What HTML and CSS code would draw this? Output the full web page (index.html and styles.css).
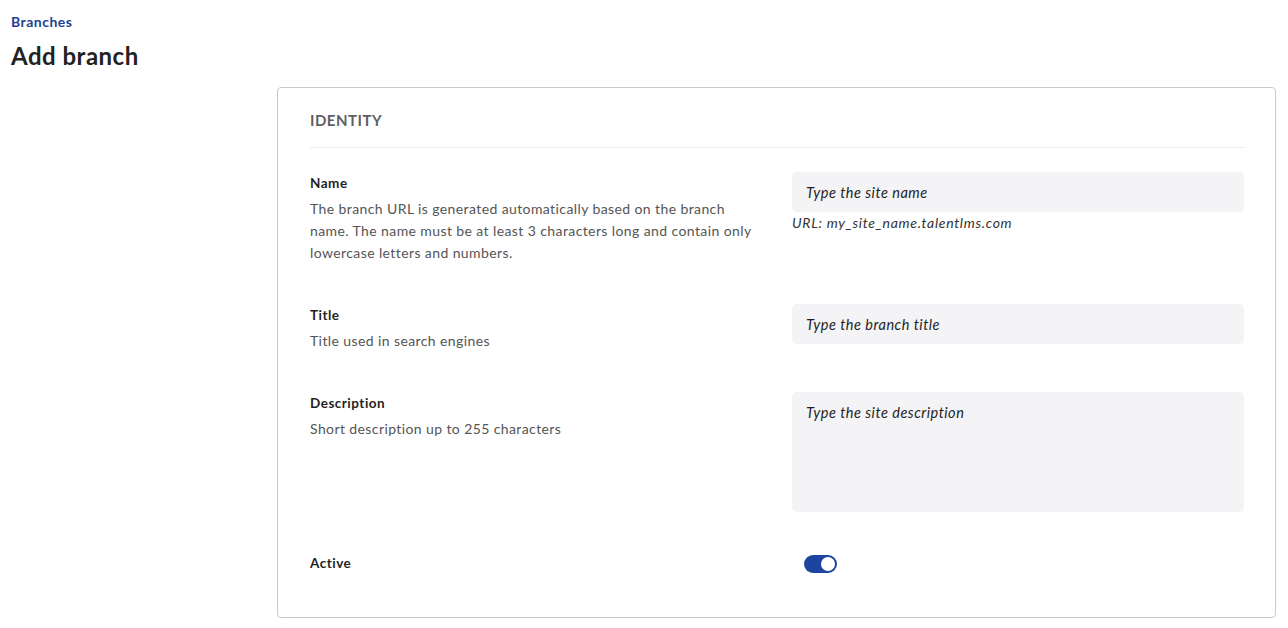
FILE: index.html
```html
<!DOCTYPE html>
<html lang="en">
<head>
  <meta charset="UTF-8">
  <meta name="viewport" content="width=device-width, initial-scale=1.0">
  <title>Add branch</title>
  <link rel="stylesheet" href="styles.css">
</head>
<body>
  <div class="page">
    <a class="crumb" href="#">Branches</a>
    <h1>Add branch</h1>

    <div class="card">
      <h2 class="section-title">IDENTITY</h2>

      <div class="field">
        <div class="field-info">
          <label for="site-name">Name</label>
          <p>The branch URL is generated automatically based on the branch name. The name must be at least 3 characters long and contain only lowercase letters and numbers.</p>
        </div>
        <div class="field-control">
          <input type="text" id="site-name" placeholder="Type the site name">
          <span class="hint">URL: my_site_name.talentlms.com</span>
        </div>
      </div>

      <div class="field">
        <div class="field-info">
          <label for="site-title">Title</label>
          <p>Title used in search engines</p>
        </div>
        <div class="field-control">
          <input type="text" id="site-title" placeholder="Type the branch title">
        </div>
      </div>

      <div class="field">
        <div class="field-info">
          <label for="site-desc">Description</label>
          <p>Short description up to 255 characters</p>
        </div>
        <div class="field-control">
          <textarea id="site-desc" placeholder="Type the site description"></textarea>
        </div>
      </div>

      <div class="field">
        <div class="field-info">
          <label>Active</label>
        </div>
        <div class="field-control">
          <span class="toggle on"><span class="knob"></span></span>
        </div>
      </div>
    </div>
  </div>
</body>
</html>
```

FILE: styles.css
```css
body {
  margin: 0;
  font-family: Lato, "Open Sans", sans-serif;
  color: #1f1f1f;
  background-color: #fff;
}
.page {
  padding: 12px 12px 0 11px;
}
.crumb {
  display: block;
  font-size: 14px;
  line-height: 20px;
  letter-spacing: 0.5px;
  font-weight: bold;
  color: #1d3f94;
  text-decoration: none;
}
h1 {
  margin: 10px 0 0;
  font-size: 24px;
  line-height: 28px;
  letter-spacing: 0.5px;
  font-weight: bold;
  color: #222;
}
.card {
  margin: 17px 0 0 266px;
  border: 1px solid #c9c9c9;
  border-radius: 4px;
  padding: 21px 31px 41px 32px;
}
.section-title {
  margin: 0;
  padding-bottom: 16px;
  border-bottom: 1px solid #ececec;
  font-size: 15px;
  line-height: 22px;
  letter-spacing: 0.5px;
  font-weight: bold;
  color: #5f5f64;
}
.field {
  display: grid;
  grid-template-columns: 1fr 1fr;
  gap: 30px;
  margin-top: 40px;
}
.section-title + .field {
  margin-top: 24px;
}
.field-info label {
  display: block;
  font-size: 13.5px;
  line-height: 22px;
  letter-spacing: 0.5px;
  font-weight: bold;
}
.field-info p {
  margin: 4px 0 0;
  font-size: 14px;
  line-height: 22px;
  letter-spacing: 0.4px;
  color: #555;
}
.field-control input,
.field-control textarea {
  display: block;
  box-sizing: border-box;
  width: 100%;
  border: none;
  border-radius: 5px;
  background-color: #f4f4f6;
  font-family: inherit;
  font-size: 14.5px;
  letter-spacing: 0.5px;
  font-style: italic;
  color: #1f1f1f;
  outline: none;
}
.field-control input {
  height: 40px;
  padding: 0 14px;
}
.field-control textarea {
  height: 120px;
  padding: 12px 14px;
  line-height: 18px;
  resize: none;
}
.field-control ::placeholder {
  color: #1f1f1f;
  opacity: 1;
}
.hint {
  display: block;
  font-size: 14px;
  line-height: 22px;
  letter-spacing: 0.7px;
  font-style: italic;
  color: #333;
}
.toggle {
  display: inline-block;
  position: relative;
  width: 33px;
  height: 18px;
  margin: 3px 0 0 12px;
  border-radius: 9px;
  background-color: #ccc;
}
.toggle.on {
  background-color: #1d44a0;
}
.toggle .knob {
  position: absolute;
  top: 2px;
  left: 2px;
  width: 14px;
  height: 14px;
  border-radius: 50%;
  background-color: #fff;
}
.toggle.on .knob {
  left: 17px;
}
```
